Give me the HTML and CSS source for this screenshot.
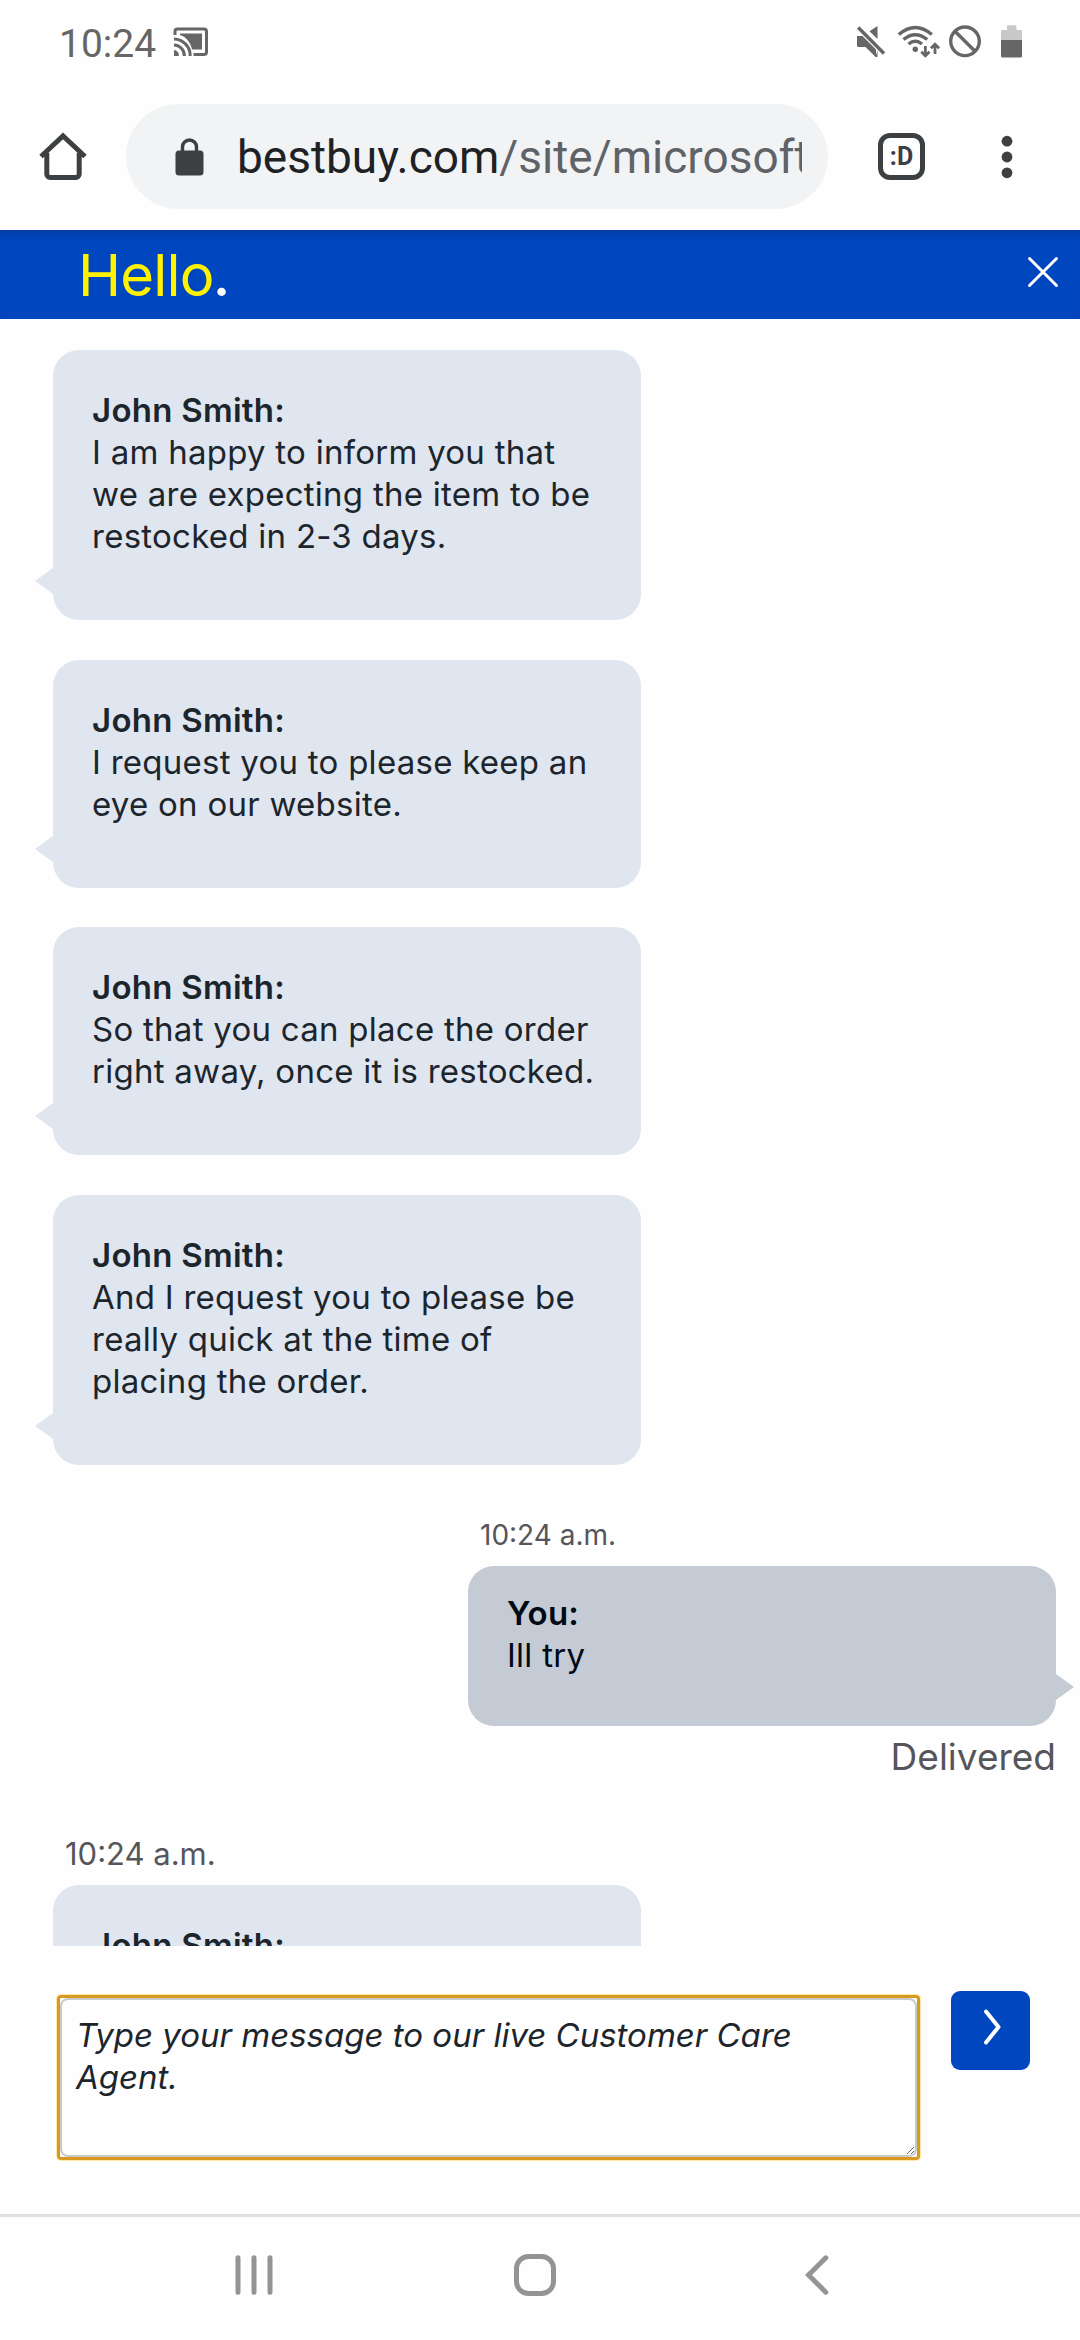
FILE: index.html
```html
<!DOCTYPE html>
<html lang="en">
	<head>
		<meta charset="utf-8">
		<title>Chat</title>
		<link rel="stylesheet" href="styles.css">
	</head>
	<body>
		<div class="status">
			<span class="clock">10:24</span>
			<svg class="cast" width="36" height="30" viewBox="0 0 36 30">
				<path d="M2 8V4.500a2.500 2.500 0 0 1 2.500-2.500H31a2.500 2.500 0 0 1 2.500 2.500V25a2.500 2.500 0 0 1-2.500 2.500H20.500" fill="none" stroke="#666" stroke-width="3"/>
				<path d="M7 6.500H29V22.500H19C17.500 15 12.500 9.500 7 8z" fill="#666"/>
				<path d="M1 12a16.500 16.500 0 0 1 16.200 17M1 18a10.500 10.500 0 0 1 10.300 11" fill="none" stroke="#666" stroke-width="3"/>
				<path d="M1 23a5 5 0 0 1 4.800 6H1z" fill="#666"/>
			</svg>
			<svg class="state" width="170" height="36" viewBox="855 24 170 36">
				<g fill="#666">
					<path d="M857 36h5.500L876 49.500V57.300L865.500 47H858.500a1.500 1.500 0 0 1-1.500-1.500zM877.500 26v13L869.500 31.300z"/>
					<path d="M877.500 50v7h-2z"/>
					<circle cx="915.300" cy="49.300" r="2.700"/>
					<path d="M1001 40h21v16a1.500 1.500 0 0 1-1.500 1.500h-18a1.500 1.500 0 0 1-1.500-1.500z"/>
				</g>
				<path d="M1007 30v-3.500a1.200 1.200 0 0 1 1.200-1.200h7a1.200 1.200 0 0 1 1.200 1.200V30h4.100a1.500 1.500 0 0 1 1.500 1.500V40h-21v-8.500a1.500 1.500 0 0 1 1.500-1.500z" fill="#c8c8c8"/>
				<g fill="none" stroke="#666" stroke-width="3.400">
					<path d="M858.200 27.500L884 53.500"/>
					<path d="M898.800 34.500Q915.300 20.500 931.800 34.500M903.500 39.500Q915.300 30 927.200 39.500M908.500 44Q915.300 38.500 922 44"/>
					<circle cx="965" cy="41.300" r="14.300"/>
					<path d="M955 31.300L975 51.300"/>
				</g>
				<path d="M925.400 46V55M921.300 51.800L925.400 55.700 929.500 51.800M935 54V45M930.900 48.200L935 44.300 939.100 48.200" fill="none" stroke="#666" stroke-width="2.800"/>
			</svg>
		</div>

		<div class="toolbar">
			<svg class="home" width="50" height="50" viewBox="0 0 50 50">
				<path d="M3 24.500L25 4 47 24.500M8.800 21V42a3.500 3.500 0 0 0 3.500 3.500H37.700a3.500 3.500 0 0 0 3.500-3.500V21" fill="none" stroke="#3c4043" stroke-width="5"/>
			</svg>
			<div class="omnibox">
				<svg class="lock" width="29" height="38" viewBox="0 0 29 38">
					<rect x="0.500" y="12.500" width="28" height="25" rx="3.500" fill="#3c4043"/>
					<path d="M7.500 14V9a7 7 0 0 1 14 0V14" fill="none" stroke="#3c4043" stroke-width="3.400"/>
				</svg>
				<div class="url">bestbuy.com<span class="path">/site/microsoft</span></div>
			</div>
			<div class="tabs">:D</div>
			<svg class="dots" width="12" height="44" viewBox="0 0 12 44" fill="#3c4043">
				<circle cx="6" cy="6.200" r="5.400"/>
				<circle cx="6" cy="22" r="5.400"/>
				<circle cx="6" cy="37.800" r="5.400"/>
			</svg>
		</div>

		<div class="header">
			<div class="hello">Hello<span class="period">.</span></div>
			<svg class="close" width="32" height="32" viewBox="0 0 32 32">
				<path d="M2.500 2.500L29.500 29.500M29.500 2.500L2.500 29.500" stroke="#fff" stroke-width="3" stroke-linecap="round"/>
			</svg>
		</div>

		<div class="chat">
			<div class="bubble agent">
				<b>John Smith:</b>
				<p>I am happy to inform you that<br>we are expecting the item to be<br>restocked in 2-3 days.</p>
			</div>
			<div class="bubble agent">
				<b>John Smith:</b>
				<p>I request you to please keep an<br>eye on our website.</p>
			</div>
			<div class="bubble agent">
				<b>John Smith:</b>
				<p>So that you can place the order<br>right away, once it is restocked.</p>
			</div>
			<div class="bubble agent">
				<b>John Smith:</b>
				<p>And I request you to please be<br>really quick at the time of<br>placing the order.</p>
			</div>
			<div class="time you-time">10:24 a.m.</div>
			<div class="bubble you">
				<b>You:</b>
				<p>Ill try</p>
			</div>
			<div class="delivered">Delivered</div>
			<div class="time agent-time">10:24 a.m.</div>
			<div class="bubble agent">
				<b>John Smith:</b>
			</div>
		</div>

		<div class="compose">
			<div class="field">
				<textarea class="message" placeholder="Type your message to our live Customer Care Agent."></textarea>
			</div>
			<button class="send">
				<svg width="20" height="36" viewBox="0 0 20 36">
					<path d="M4 2.500L16.500 18 4 33.500" fill="none" stroke="#fff" stroke-width="4" stroke-linecap="round" stroke-linejoin="round"/>
				</svg>
			</button>
		</div>

		<div class="nav">
			<svg width="38" height="40" viewBox="0 0 38 40">
				<path d="M3 2.700V37.300M19 2.700V37.300M35 2.700V37.300" stroke="#949494" stroke-width="5" stroke-linecap="round"/>
			</svg>
			<svg class="nav-home" width="42" height="42" viewBox="0 0 42 42">
				<rect x="2.500" y="2.500" width="37" height="37" rx="12" fill="none" stroke="#949494" stroke-width="5"/>
			</svg>
			<svg width="24" height="40" viewBox="0 0 24 40">
				<path d="M20.800 2.800L3.500 20 20.800 37.200" fill="none" stroke="#949494" stroke-width="5" stroke-linecap="round"/>
			</svg>
		</div>
	</body>
</html>
```

FILE: styles.css
```css
* {
	box-sizing: border-box;
}
body {
	margin: 0;
	width: 1080px;
	height: 2340px;
	display: flex;
	flex-direction: column;
	overflow: hidden;
	background: #fefefe;
	font-family: Inter, "Liberation Sans", sans-serif;
	color: #1d252c;
}
svg {
	display: block;
	flex: none;
}

/* phone status bar */
.status {
	height: 84px;
	flex: none;
	display: flex;
	align-items: center;
	padding: 0 55px 0 59px;
	color: #666;
}
.clock {
	font: 39px/44px Roboto, sans-serif;
	width: 114px;
	margin-top: 3px;
}
.state {
	margin-left: auto;
}

/* browser toolbar */
.toolbar {
	height: 146px;
	flex: none;
	display: flex;
	align-items: center;
	padding: 0 67px 1px 38px;
}
.omnibox {
	width: 702px;
	height: 105px;
	margin-left: 38px;
	padding: 0 26px 0 49px;
	border-radius: 53px;
	background: #f1f3f4;
	display: flex;
	align-items: center;
}
.url {
	width: 565px;
	margin: 1px 0 0 33px;
	overflow: hidden;
	white-space: nowrap;
	font: 46px/60px Roboto, sans-serif;
	color: #202124;
}
.path {
	color: #5f6368;
}
.tabs {
	width: 47px;
	height: 47px;
	margin-left: 50px;
	border: 5px solid #3c4043;
	border-radius: 12px;
	font: bold 25px/37px "Roboto", sans-serif;
	color: #3c4043;
	text-align: center;
}
.dots {
	margin-left: auto;
}

.header {
	height: 89px;
	flex: none;
	display: flex;
	align-items: center;
	justify-content: space-between;
	padding: 0 21px 0 78px;
	background: #0046be;
	box-shadow: inset 0 9px 8px -7px #083a94;
}
.hello {
	font-size: 58px;
	font-weight: 400;
	line-height: 70px;
	letter-spacing: -0.800px;
	color: #fff200;
}
.period {
	color: #fff;
	font-weight: 500;
	margin-left: -1px;
}
.close {
	margin-bottom: 5px;
}

/* conversation */
.chat {
	height: 1627px;
	flex: none;
	display: flex;
	flex-direction: column;
	padding-top: 31px;
	overflow: hidden;
}
.bubble {
	position: relative;
	flex: none;
	width: 588px;
	border-radius: 26px;
	font-size: 33px;
	line-height: 42px;
	letter-spacing: 0.260px;
}
.bubble b {
	display: block;
	font-weight: 600;
}
.bubble p {
	margin: 0;
}
.agent {
	margin: 0 0 39.500px 53px;
	padding: 39px 0 63px 39px;
	background: #dfe6f0;
}
.you {
	margin-left: 468px;
	padding: 26px 0 50px 39px;
	background: #c5cbd5;
	color: #000a14;
}
.bubble::after {
	content: "";
	position: absolute;
	bottom: 26px;
	border: 13px solid transparent;
}
.agent::after {
	left: -18px;
	border-left: 0;
	border-right: 18px solid #dfe6f0;
}
.you::after {
	right: -18px;
	border-right: 0;
	border-left: 18px solid #c5cbd5;
}
.time {
	color: #55555a;
	line-height: 36px;
}
.you-time {
	margin: 13px 0 13px 480px;
	font-size: 28px;
}
.agent-time {
	margin: 56px 0 13px 65px;
	font-size: 31px;
}
.delivered {
	margin: 8px 24px 0 0;
	font-size: 37px;
	line-height: 46px;
	text-align: right;
	color: #55555a;
}

/* message box */
.compose {
	height: 268px;
	flex: none;
	display: flex;
	align-items: flex-start;
	padding: 45px 50px 0 57px;
}
.field {
	width: 863px;
	height: 165px;
	margin-top: 4px;
	border: 3px solid #d69a22;
	border-radius: 4px;
	box-shadow: 0 0 0 1px #ffe8a8;
}
.message {
	display: block;
	width: 857px;
	height: 159px;
	margin: 0;
	padding: 14px 40px 14px 14px;
	border: 2px solid #c9c9c9;
	border-radius: 8px;
	outline: none;
	background: #fefefe;
	font: italic 33px/42px Inter, sans-serif;
}
.message::placeholder {
	color: #1d252c;
}
.send {
	width: 79px;
	height: 79px;
	margin-left: auto;
	padding: 0 0 7px 2px;
	border: 0;
	border-radius: 9px;
	background: #0046be;
	display: flex;
	align-items: center;
	justify-content: center;
}

.nav {
	flex: 1;
	display: flex;
	align-items: center;
	justify-content: space-between;
	padding: 0 251px 7px 235px;
	border-top: 3px solid #e0e0e0;
}
.nav-home {
	margin-right: 8px;
}
```
